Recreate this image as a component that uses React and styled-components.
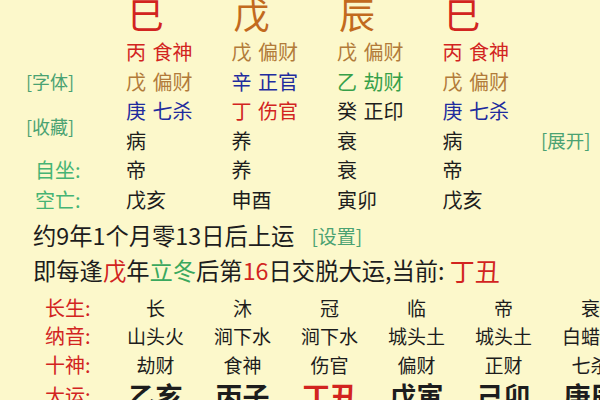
import React from "react";
import styled, { createGlobalStyle } from "styled-components";

const Global = createGlobalStyle`
  html, body {
    margin: 0;
    padding: 0;
    background: #fcf8cb;
    overflow: hidden;
  }
  body {
    font-family: "Noto Sans CJK SC", "Noto Sans", sans-serif;
    color: #1d1d1d;
  }
`;

const C = {
  red: "#d2241f",
  orange: "#c26a1e",
  brown: "#b27b3a",
  blue: "#1f2c9e",
  green: "#37a049",
  link: "#4aa272",
  label: "#46b474",
  black: "#1d1d1d",
};

const Page = styled.div`
  width: 600px;
  height: 400px;
  overflow: hidden;
`;

const Chart = styled.div`
  display: grid;
  grid-template-columns: 126px repeat(4, 105.5px) 1fr;
  grid-template-rows: 37px repeat(6, 29.5px);
`;

const Stem = styled.div`
  font-size: 36px;
  line-height: 26px;
  padding-bottom: 11px;
  padding-left: 2px;
  color: ${(p) => p.color};
`;

const Cell = styled.div`
  font-size: 20px;
  line-height: 29.5px;
  white-space: nowrap;
  word-spacing: 2px;
  color: ${(p) => p.color || C.black};
`;

const SideLink = styled.div`
  grid-column: ${(p) => p.col};
  grid-row: ${(p) => p.row};
  align-self: center;
  margin-left: ${(p) => p.pad ?? 26}px;
  font-size: ${(p) => p.size || 18}px;
  line-height: 24px;
  color: ${C.link};
  white-space: nowrap;
`;

const RowLabel = styled.div`
  grid-column: 1;
  padding-left: 35px;
  font-size: 20px;
  line-height: 29.5px;
  color: ${C.label};
`;

const Line = styled.div`
  display: flex;
  align-items: center;
  height: 35px;
  padding-left: 33px;
  font-size: 23.3px;
  white-space: nowrap;
  margin-top: ${(p) => p.top || 0}px;
`;

const Tint = styled.span`
  color: ${(p) => p.color};
  font-size: ${(p) => p.size || "inherit"};
`;

const Setting = styled.span`
  margin-left: 17px;
  font-size: 19px;
  color: ${C.link};
`;

const Table = styled.div`
  display: grid;
  grid-template-columns: 112px repeat(6, 87px);
  grid-template-rows: repeat(3, 28.5px) 33px;
  margin-top: 6px;
`;

const TLabel = styled.div`
  padding-left: 45px;
  font-size: 20px;
  line-height: ${(p) => (p.big ? 33 : 28.5)}px;
  color: ${C.red};
  white-space: nowrap;
`;

const TCell = styled.div`
  text-align: center;
  white-space: nowrap;
  font-size: ${(p) => (p.big ? "27px" : "19px")};
  font-weight: ${(p) => (p.big ? 700 : 400)};
  line-height: ${(p) => (p.big ? 33 : 28.5)}px;
  color: ${(p) => p.color || C.black};
`;

const stems = [
  ["巳", C.red],
  ["戊", C.orange],
  ["辰", C.orange],
  ["巳", C.red],
];

const hidden = [
  [["丙 食神", C.red], ["戊 偏财", C.brown], ["戊 偏财", C.brown], ["丙 食神", C.red]],
  [["戊 偏财", C.brown], ["辛 正官", C.blue], ["乙 劫财", C.green], ["戊 偏财", C.brown]],
  [["庚 七杀", C.blue], ["丁 伤官", C.red], ["癸 正印", C.black], ["庚 七杀", C.blue]],
  [["病"], ["养"], ["衰"], ["病"]],
];

const labelled = [
  ["自坐:", ["帝", "养", "衰", "帝"]],
  ["空亡:", ["戊亥", "申酉", "寅卯", "戊亥"]],
];

const table = [
  ["长生:", ["长", "沐", "冠", "临", "帝", "衰"]],
  ["纳音:", ["山头火", "涧下水", "涧下水", "城头土", "城头土", "白蜡金"]],
  ["十神:", ["劫财", "食神", "伤官", "偏财", "正财", "七杀"]],
];

const luck = ["乙亥", "丙子", "丁丑", "戊寅", "己卯", "庚辰"];

export default function App() {
  return (
    <Page>
      <Global />
      <Chart>
        <div />
        {stems.map(([s, c], i) => (
          <Stem key={i} color={c}>{s}</Stem>
        ))}
        <div />
        {hidden.map((row, r) =>
          row.map(([t, c], i) => (
            <Cell key={`${r}-${i}`} color={c} style={{ gridRow: r + 2, gridColumn: i + 2 }}>
              {t}
            </Cell>
          ))
        )}
        <SideLink col={1} row="3">[字体]</SideLink>
        <SideLink col={1} row="4 / 6">[收藏]</SideLink>
        <SideLink col={6} row="5" pad={-7} size={18.5}>[展开]</SideLink>
        {labelled.map(([label, vals], r) => (
          <React.Fragment key={label}>
            <RowLabel style={{ gridRow: r + 6 }}>{label}</RowLabel>
            {vals.map((v, i) => (
              <Cell key={i} style={{ gridRow: r + 6, gridColumn: i + 2 }}>{v}</Cell>
            ))}
          </React.Fragment>
        ))}
      </Chart>
      <Line top={3.5}>
        约9年1个月零13日后上运<Setting>[设置]</Setting>
      </Line>
      <Line>
        即每逢<Tint color={C.red}>戊</Tint>年<Tint color="#3aa85e">立冬</Tint>后第
        <Tint color={C.red}>16</Tint>日交脱大运,当前:&nbsp;
        <Tint color={C.red} size="25px">丁丑</Tint>
      </Line>
      <Table>
        {table.map(([label, vals]) => (
          <React.Fragment key={label}>
            <TLabel>{label}</TLabel>
            {vals.map((v, i) => (
              <TCell key={i}>{v}</TCell>
            ))}
          </React.Fragment>
        ))}
        <TLabel big>大运:</TLabel>
        {luck.map((v, i) => (
          <TCell key={i} big color={i === 2 ? C.red : C.black}>{v}</TCell>
        ))}
      </Table>
    </Page>
  );
}
